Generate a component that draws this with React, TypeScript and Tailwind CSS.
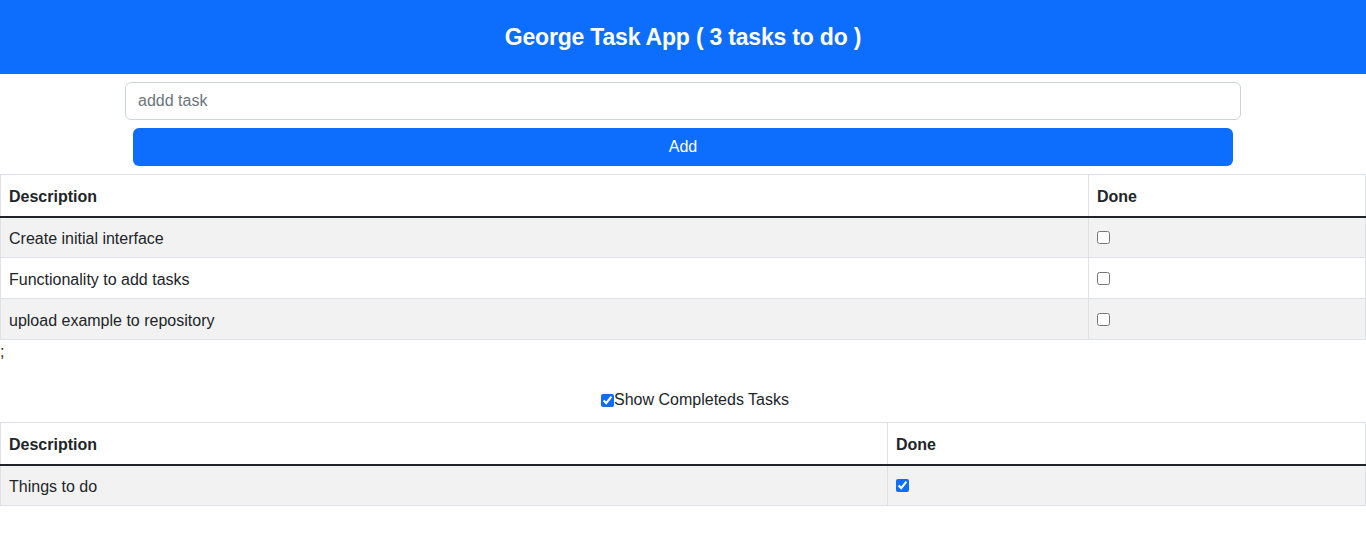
import { useState } from "react";

interface Task {
  description: string;
  done: boolean;
}

const initialTasks: Task[] = [
  { description: "Create initial interface", done: false },
  { description: "Functionality to add tasks", done: false },
  { description: "upload example to repository", done: false },
  { description: "Things to do", done: true },
];

function TaskTable({ tasks, doneCol }: { tasks: Task[]; doneCol: string }) {
  return (
    <table className="w-full border-collapse border border-[#dee2e6] text-[16px] text-[#212529]">
      <thead>
        <tr className="border-b-2 border-b-[#212529]">
          <th className="h-[42px] px-2 pt-[3px] text-left font-bold">Description</th>
          <th className={`h-[42px] border-l border-[#dee2e6] px-2 pt-[3px] text-left font-bold ${doneCol}`}>Done</th>
        </tr>
      </thead>
      <tbody>
        {tasks.map((t, i) => (
          <tr key={i} className={`border-t border-[#dee2e6] ${i % 2 === 0 ? "bg-[#f2f2f2]" : "bg-white"}`}>
            <td className="h-[41px] px-2 pt-[3px]">{t.description}</td>
            <td className="h-[41px] border-l border-[#dee2e6] px-2">
              <input type="checkbox" defaultChecked={t.done} className="block h-[13px] w-[13px] accent-[#0d6efd]" />
            </td>
          </tr>
        ))}
      </tbody>
    </table>
  );
}

export default function App() {
  const [tasks] = useState<Task[]>(initialTasks);
  const pending = tasks.filter((t) => !t.done);
  const completed = tasks.filter((t) => t.done);

  return (
    <div className="min-h-[558px] bg-white font-['Liberation_Sans',sans-serif] text-[#212529]">
      <div className="flex h-[74px] items-center justify-center bg-[#0d6efd]">
        <h1 className="text-[23px] font-bold tracking-[-0.2px] text-white">George Task App ( {pending.length} tasks to do )</h1>
      </div>

      <div className="mx-auto mt-2 w-[1116px]">
        <input
          placeholder="addd task"
          className="h-[38px] w-full rounded-[6px] border border-[#ced4da] px-3 text-[16px] placeholder:text-[#6c757d]"
        />
      </div>
      <div className="mx-auto mt-2 w-[1100px]">
        <button className="h-[38px] w-full rounded-[6px] bg-[#0d6efd] text-[16px] text-white">Add</button>
      </div>

      <div className="mt-2">
        <TaskTable tasks={pending} doneCol="w-[277px]" />
      </div>

      <div className="h-[24px] text-[16px] leading-[24px]">;</div>

      <div className="mt-[24px] mb-[10px] flex h-[24px] items-center justify-center text-[16px]">
        <label className="ml-[24px] flex items-center">
          <input type="checkbox" defaultChecked className="h-[13px] w-[13px] accent-[#0d6efd]" />
          <span>Show Completeds Tasks</span>
        </label>
      </div>

      <TaskTable tasks={completed} doneCol="w-[478px]" />
    </div>
  );
}
